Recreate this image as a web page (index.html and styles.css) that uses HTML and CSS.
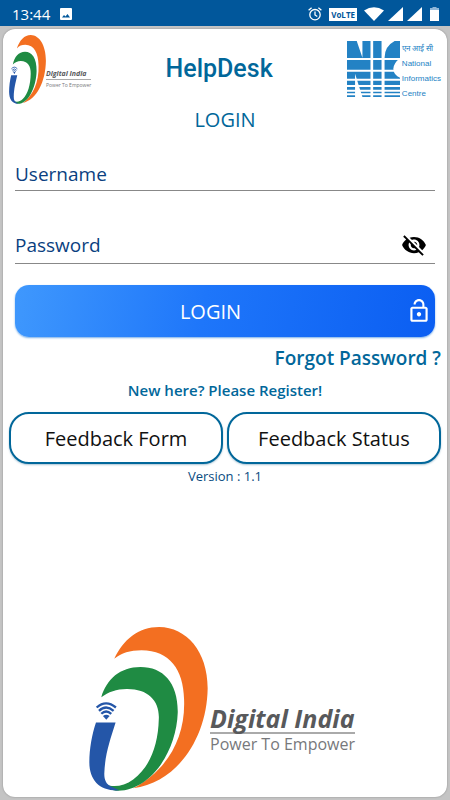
FILE: index.html
```html
<!DOCTYPE html>
<html lang="en">
<head>
  <meta charset="UTF-8" />
  <meta name="viewport" content="width=device-width, initial-scale=1.0" />
  <title>HelpDesk Login</title>
  <link rel="stylesheet" href="styles.css">
</head>
<body>
  <!-- shared emblem shape -->
  <svg class="defs" width="0" height="0" aria-hidden="true">
    <symbol id="emblem" viewBox="57 47 358 495" preserveAspectRatio="none">
      <path fill="#f36f21" d="M133 143C160 85 205 47 268 47C350 48 414 120 414 232C412 380 325 515 190 534C290 480 348 385 343 265C341 175 300 118 215 117C180 117 155 125 133 143Z"/>
      <path fill="#1f8b43" d="M94 259C110 205 150 168 212 168C280 168 325 215 324 305C320 425 240 541 145 541C125 541 110 530 104 519C125 532 160 529 190 507C240 470 265 405 267 325C270 270 235 233 170 234C140 234 115 243 94 259Z"/>
      <path fill="#2456a8" d="M78 335H137C120 390 105 430 103 490C103 508 108 522 125 529L148 540C90 543 58 510 58 455C58 415 66 370 78 335Z"/>
      <g fill="none" stroke="#2456a8" stroke-width="7">
        <path d="M80 290Q108 265 138 290"/>
        <path d="M87 300Q108 280 131 300"/>
        <path d="M94 309Q108 295 124 309"/>
      </g>
      <path fill="#2456a8" d="M99 316Q109 307 119 316L109 327Z"/>
    </symbol>
  </svg>

  <div class="status-bar">
    <span class="time">13:44</span>
    <svg class="icon-photo" viewBox="0 0 12 12"><path fill="#fff" fill-rule="evenodd" d="M1 0H11Q12 0 12 1V11Q12 12 11 12H1Q0 12 0 11V1Q0 0 1 0ZM2 9.500H10L7.500 6L5.500 8.500L4 7Z"/></svg>
    <div class="status-icons">
      <svg width="14" height="14" viewBox="0 0 14 14" fill="none" stroke="#fff" stroke-width="1.300"><circle cx="7" cy="7.700" r="5.200"/><path d="M7 4.500V8L9.300 9.500M.6 3.200L3.600 .7M13.400 3.200L10.400 .7"/></svg>
      <span class="volte">VoLTE</span>
      <svg width="20" height="14" viewBox="0 0 20 14" fill="#fff"><path d="M0 3.500Q10-3 20 3.500L10 14Z"/></svg>
      <svg width="15" height="14" viewBox="0 0 15 14" fill="#fff"><path d="M15 0V14H0Z"/></svg>
      <svg width="15" height="14" viewBox="0 0 15 14" fill="#fff"><path d="M15 0V14H0Z"/></svg>
      <svg class="battery" width="9" height="14" viewBox="0 0 9 14" fill="#fff"><path fill="#8fb6d8" d="M0 1H2.500V0H6.500V1H9V4H0Z"/><path d="M0 3H9V14H0Z"/></svg>
    </div>
  </div>

  <main class="card">
    <header class="header">
      <div class="brand">
        <svg class="brand-emblem"><use href="#emblem"/></svg>
        <div class="brand-text">
          <div class="brand-name">Digital India</div>
          <div class="brand-tag">Power To Empower</div>
        </div>
      </div>
      <h1 class="title">HelpDesk</h1>
      <div class="nic">
        <svg class="nic-mark" viewBox="0 0 158 168" preserveAspectRatio="none">
          <path fill="#2382c4" d="M0 0H29L46 50V0H70V168H46L24 98V168H0ZM78 0H103V168H78ZM158 0H142Q112 16 112 50V168H158V110Q140 104 138 84Q139 66 158 52Z"/>
          <path stroke="#fff" stroke-width="6" d="M0 54H158M0 89H158M0 116H158M0 135H158M0 149H158M0 160H158"/>
        </svg>
        <div class="nic-text">
          <span lang="hi">एन आई सी</span><br>National<br>Informatics<br>Centre
        </div>
      </div>
    </header>

    <h2 class="subtitle">LOGIN</h2>

    <form class="login-form">
      <div class="field">
        <input type="text" placeholder="Username" aria-label="Username">
      </div>
      <div class="field field-password">
        <input type="password" placeholder="Password" aria-label="Password">
        <button type="button" class="toggle" aria-label="Show password">
          <svg width="26" height="26" viewBox="0 0 24 24"><path d="M12 7c2.760 0 5 2.240 5 5 0 .65-.13 1.260-.36 1.830l2.920 2.920c1.510-1.260 2.700-2.890 3.430-4.750-1.730-4.390-6-7.500-11-7.500-1.400 0-2.740.25-3.980.7l2.160 2.160C10.740 7.130 11.350 7 12 7zM2 4.270l2.280 2.280.46.46C3.080 8.300 1.780 10.020 1 12c1.730 4.390 6 7.500 11 7.500 1.550 0 3.030-.3 4.380-.84l.42.42L19.730 22 21 20.730 3.270 3 2 4.270zM7.530 9.800l1.550 1.550c-.05.21-.08.43-.08.650 0 1.660 1.340 3 3 3 .22 0 .44-.03.65-.08l1.550 1.550c-.67.33-1.410.53-2.200.53-2.760 0-5-2.240-5-5 0-.79.2-1.530.53-2.200zm4.310-.78l3.150 3.150.02-.16c0-1.660-1.340-3-3-3l-.17.01z"/></svg>
        </button>
      </div>
      <button type="submit" class="login-btn">
        <span>LOGIN</span>
        <svg width="26" height="26" viewBox="0 0 24 24" fill="#fff"><path d="M12 17c1.100 0 2-.9 2-2s-.9-2-2-2-2 .9-2 2 .9 2 2 2zm6-9h-1V6c0-2.760-2.240-5-5-5S7 3.240 7 6h1.900c0-1.710 1.390-3.100 3.100-3.100s3.100 1.390 3.100 3.100v2H6c-1.100 0-2 .9-2 2v10c0 1.100.9 2 2 2h12c1.100 0 2-.9 2-2V10c0-1.100-.9-2-2-2zm0 12H6V10h12v10z"/></svg>
      </button>
    </form>

    <a class="forgot" href="#">Forgot Password ?</a>
    <a class="register" href="#">New here? Please Register!</a>

    <div class="feedback">
      <button type="button">Feedback Form</button>
      <button type="button">Feedback Status</button>
    </div>
    <p class="version">Version : 1.1</p>

    <footer class="brand brand-large">
      <svg class="brand-emblem"><use href="#emblem"/></svg>
      <div class="brand-text">
        <div class="brand-name">Digital India</div>
        <div class="brand-tag">Power To Empower</div>
      </div>
    </footer>
  </main>
</body>
</html>
```
FILE: styles.css
```css
* {
  box-sizing: border-box;
}
body {
  margin: 0;
  min-height: 100vh;
  display: flex;
  flex-direction: column;
  background: #c4c4c4;
  font-family: "Open Sans", "Noto Sans", sans-serif;
  color: #01679a;
}
button, input {
  font-family: inherit;
}
.defs {
  position: absolute;
}
.status-bar {
  display: flex;
  align-items: center;
  height: 26px;
  padding: 2px 11px 0 12px;
  background: #01579b;
  color: #fff;
}
.time {
  font-size: 15px;
  line-height: 20px;
}
.icon-photo {
  width: 12px;
  height: 12px;
  margin-left: 10px;
}
.status-icons {
  display: flex;
  align-items: center;
  margin-left: auto;
  gap: 4px;
}
.volte {
  margin: 0 3px;
  padding: 0 2px;
  background: #fff;
  color: #01579b;
  font-size: 8px;
  font-weight: 700;
  line-height: 13px;
}
.battery {
  margin-left: 4px;
}
.card {
  flex: 1;
  display: flex;
  flex-direction: column;
  margin: 3px;
  padding: 6px;
  background: #fff;
  border-radius: 12px;
  box-shadow: 0 0 2px #888;
}
.header {
  display: flex;
  justify-content: space-between;
  height: 70px;
}
.brand {
  display: flex;
}
.brand-emblem {
  width: 37px;
  height: 69px;
}
.brand-text {
  padding-top: 33px;
  white-space: nowrap;
}
.brand-name {
  border-bottom: 1px solid #aaa;
  color: #58595b;
  font-size: 7px;
  font-weight: 700;
  font-style: italic;
  line-height: 11px;
}
.brand-tag {
  color: #77787b;
  font-size: 5px;
  line-height: 10px;
}
.title {
  margin: 0;
  padding-top: 15px;
  font-family: Roboto, sans-serif;
  font-size: 25px;
  font-weight: 500;
  line-height: 38px;
}
.nic {
  display: flex;
  justify-content: flex-end;
  gap: 2px;
  padding-top: 6px;
}
.nic-mark {
  width: 53px;
  height: 56px;
}
.nic-text {
  color: #2382c4;
  font-family: "Liberation Sans", sans-serif;
  font-size: 8px;
  line-height: 15px;
}
.subtitle {
  margin: 0;
  padding-top: 1px;
  font-size: 20px;
  font-weight: 500;
  line-height: 28px;
  text-align: center;
}
.login-form {
  display: flex;
  flex-direction: column;
  padding: 24px 6px 0;
}
.field {
  display: flex;
  align-items: center;
  height: 33px;
  border-bottom: 1px solid #888;
}
.field input {
  flex: 1;
  min-width: 0;
  padding: 0;
  border: none;
  outline: none;
  background: none;
  color: #0a3f80;
  font-size: 19px;
  line-height: 30px;
}
.field input::placeholder {
  color: #0a3f80;
  opacity: 1;
}
.field-password {
  height: 37px;
  margin-top: 36px;
}
.toggle {
  display: flex;
  margin-right: 8px;
  padding: 0;
  border: none;
  background: none;
}
.login-btn {
  display: flex;
  align-items: center;
  height: 52px;
  margin-top: 21px;
  padding: 0 3px 0 0;
  border: none;
  border-radius: 14px;
  background: linear-gradient(100deg, #3f98fd, #1e76fa 45%, #0b5ef2);
  box-shadow: 0 1px 2px #7ab0e8;
  color: #fff;
  font-size: 20px;
}
.login-btn span {
  flex: 1;
}
.forgot,
.register {
  color: #01679a;
  text-decoration: none;
  font-weight: 600;
}
.forgot {
  align-self: flex-end;
  margin-top: 7px;
  font-size: 19px;
  line-height: 28px;
}
.register {
  align-self: center;
  margin-top: 6px;
  font-size: 15px;
  line-height: 24px;
}
.feedback {
  display: grid;
  grid-template-columns: 1fr 1fr;
  gap: 4px;
  margin-top: 10px;
}
.feedback button {
  height: 52px;
  padding: 0;
  border: 2px solid #01679a;
  border-radius: 20px;
  background: #fff;
  box-shadow: 0 1px 2px #aac4d4;
  color: #111;
  font-size: 20px;
}
.version {
  margin: 2px 0 0;
  color: #0a4a80;
  font-size: 13px;
  line-height: 20px;
  text-align: center;
}
.brand-large {
  justify-content: center;
  margin-top: auto;
  padding-right: 6px;
}
.brand-large .brand-emblem {
  width: 119px;
  height: 164px;
}
.brand-large .brand-text {
  padding: 78px 0 0 2px;
}
.brand-large .brand-name {
  border-width: 2px;
  font-size: 25px;
  line-height: 27px;
}
.brand-large .brand-tag {
  font-size: 16px;
  line-height: 20px;
}
```
